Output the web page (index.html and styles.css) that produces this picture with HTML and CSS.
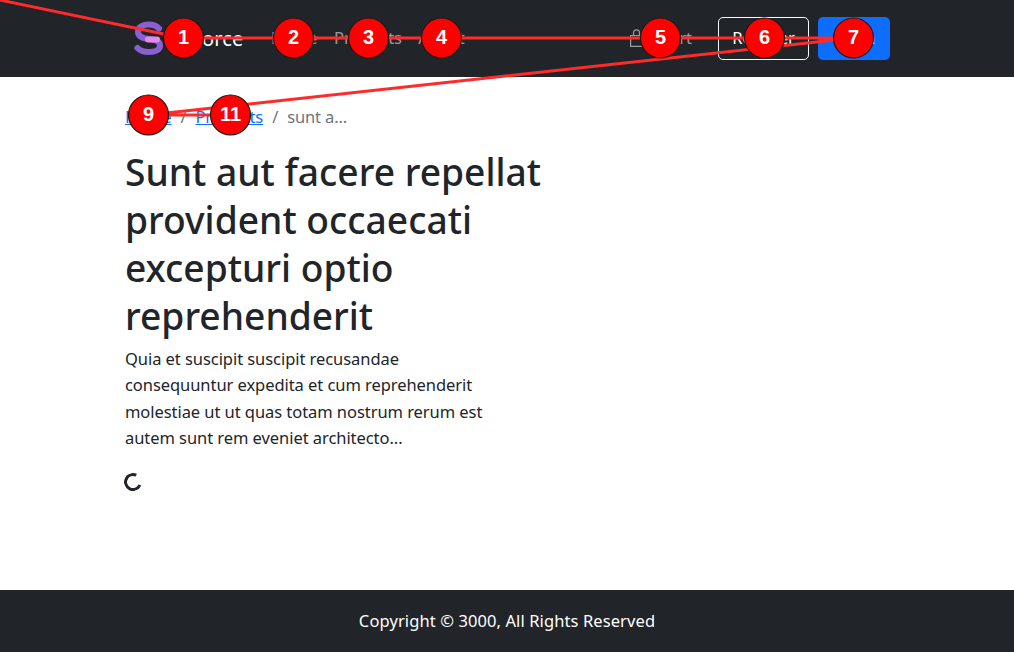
FILE: index.html
```html
<!DOCTYPE html>
<html lang="en">
<head>
<meta charset="utf-8">
<title>Sunt aut facere</title>
<link rel="stylesheet" href="styles.css">
</head>
<body>
<div class="page">
  <header class="navbar">
    <div class="nav-inner">
      <a class="brand" href="#">
        <svg class="logo" width="30" height="36" viewBox="0 0 30 36" aria-hidden="true">
          <path d="M25 7.500C22.500 4.700 19 3.500 15 3.500C9 3.500 4 6 4 10.500C4 15.500 9 17.500 15 18C21 18.500 26 20 26 24.500C26 29 21 31 15 31C10 31 6 29.700 3.500 27" fill="none" stroke="#8a5fd1" stroke-width="6" stroke-linecap="round"/>
          <path d="M14 18.500H23" stroke="#e58ae6" stroke-width="6" stroke-linecap="round"/>
        </svg>
        <span class="brand-name">Sforce</span>
      </a>
      <nav class="nav-links">
        <a href="#">Home</a>
        <a href="#">Products</a>
        <a href="#">About</a>
      </nav>
      <a class="cart" href="#">
        <svg width="13" height="18" viewBox="0 0 13 18" aria-hidden="true">
          <path d="M0.600 6.500H12.400V17.400H0.600Z M3.500 6.500V3.800C3.500 2 4.700 0.800 6.500 0.800C8.300 0.800 9.500 2 9.500 3.800V6.500" fill="none" stroke="#9a9da0" stroke-width="1.200"/>
        </svg>
        <span>Cart</span>
      </a>
      <a class="btn btn-outline" href="#">Register</a>
      <a class="btn btn-primary" href="#">Login</a>
    </div>
  </header>

  <main class="content">
    <ol class="breadcrumb">
      <li><a href="#">Home</a></li>
      <li class="sep">/</li>
      <li><a href="#">Products</a></li>
      <li class="sep">/</li>
      <li class="current">sunt a...</li>
    </ol>
    <h1>Sunt aut facere repellat provident occaecati excepturi optio reprehenderit</h1>
    <p>Quia et suscipit suscipit recusandae consequuntur expedita et cum reprehenderit molestiae ut ut quas totam nostrum rerum est autem sunt rem eveniet architecto...</p>
    <div class="spinner" role="status"></div>
  </main>

  <footer class="footer">Copyright © 3000, All Rights Reserved</footer>

  <svg class="overlay" width="1014" height="652" viewBox="0 0 1014 652">
    <g class="lines">
      <polyline points="-10,-2 183,38 293,38 368,38 441,38 660,38 764,38 853,38 148,115 230,115"/>
    </g>
    <g class="marker"><circle cx="183.500" cy="38" r="20"/><text x="183.500" y="44">1</text></g>
    <g class="marker"><circle cx="293.500" cy="38" r="20"/><text x="293.500" y="44">2</text></g>
    <g class="marker"><circle cx="368.500" cy="38" r="20"/><text x="368.500" y="44">3</text></g>
    <g class="marker"><circle cx="441.500" cy="38" r="20"/><text x="441.500" y="44">4</text></g>
    <g class="marker"><circle cx="660.500" cy="38" r="20"/><text x="660.500" y="44">5</text></g>
    <g class="marker"><circle cx="764.500" cy="38" r="20"/><text x="764.500" y="44">6</text></g>
    <g class="marker"><circle cx="853.500" cy="38" r="20"/><text x="853.500" y="44">7</text></g>
    <g class="marker"><circle cx="148.500" cy="115" r="20"/><text x="148.500" y="121">9</text></g>
    <g class="marker"><circle cx="230.500" cy="115" r="20"/><text x="230.500" y="121">11</text></g>
  </svg>
</div>
</body>
</html>
```
FILE: styles.css
```css
* { box-sizing: border-box; }
html, body { margin: 0; padding: 0; }
body {
  font-family: "Noto Sans", "Open Sans", sans-serif;
  font-size: 16.5px;
  line-height: 1.6;
  color: #212529;
  background: #fff;
}
.page {
  position: relative;
  width: 1014px;
  height: 652px;
  display: flex;
  flex-direction: column;
  overflow: hidden;
}
.navbar {
  height: 77px;
  flex: none;
  background: #212529;
}
.nav-inner {
  height: 100%;
  margin-left: 134px;
  width: 756px;
  display: flex;
  align-items: center;
}
.brand {
  display: flex;
  align-items: center;
  gap: 20px;
  width: 137px;
  color: #fff;
  text-decoration: none;
  font-size: 20px;
  letter-spacing: 0.1px;
}
.logo { flex: none; }
.nav-links {
  display: flex;
  gap: 16.500px;
  letter-spacing: -0.1px;
}
.nav-links a, .cart {
  color: rgba(255, 255, 255, 0.55);
  text-decoration: none;
}
.cart {
  margin-left: auto;
  margin-right: 26px;
  display: flex;
  align-items: center;
  gap: 17px;
}
.btn {
  height: 43px;
  display: flex;
  align-items: center;
  justify-content: center;
  border-radius: 5px;
  color: #fff;
  text-decoration: none;
  letter-spacing: -0.2px;
}
.btn-outline { width: 91px; border: 1px solid #f8f9fa; margin-right: 9px; }
.btn-primary { width: 72px; background: #0d6efd; }
.content {
  flex: 1;
  margin-left: 125px;
  width: 425px;
  padding-top: 27px;
}
.breadcrumb {
  list-style: none;
  margin: 0 0 18px;
  padding: 0;
  display: flex;
  gap: 9px;
  letter-spacing: -0.12px;
}
.breadcrumb a { color: #0d6efd; }
.sep, .current { color: #6c757d; }
h1 {
  margin: 0;
  font-size: 37.200px;
  font-weight: 500;
  line-height: 48px;
  color: #212529;
}
p {
  margin: 5.600px 0 0;
  width: 365px;
  line-height: 26.400px;
  letter-spacing: -0.06px;
}
.spinner {
  width: 18px;
  height: 18px;
  margin-top: 21px;
  margin-left: -1px;
  border: 3px solid #212529;
  border-right-color: transparent;
  border-radius: 50%;
  transform: rotate(-20deg);
}
.footer {
  height: 62px;
  flex: none;
  display: flex;
  align-items: center;
  justify-content: center;
  background: #212529;
  color: #fff;
  letter-spacing: 0.1px;
}
.overlay {
  position: absolute;
  left: 0;
  top: 0;
  pointer-events: none;
}
.lines polyline {
  fill: none;
  stroke: #ff2a2a;
  stroke-width: 3;
  stroke-linejoin: round;
}
.marker circle {
  fill: #ff0000;
  stroke: #1a1a1a;
  stroke-width: 1.200;
}
.marker text {
  font-family: "Liberation Sans", Arial, sans-serif;
  font-size: 20px;
  font-weight: 700;
  fill: #fff;
  text-anchor: middle;
}
```
